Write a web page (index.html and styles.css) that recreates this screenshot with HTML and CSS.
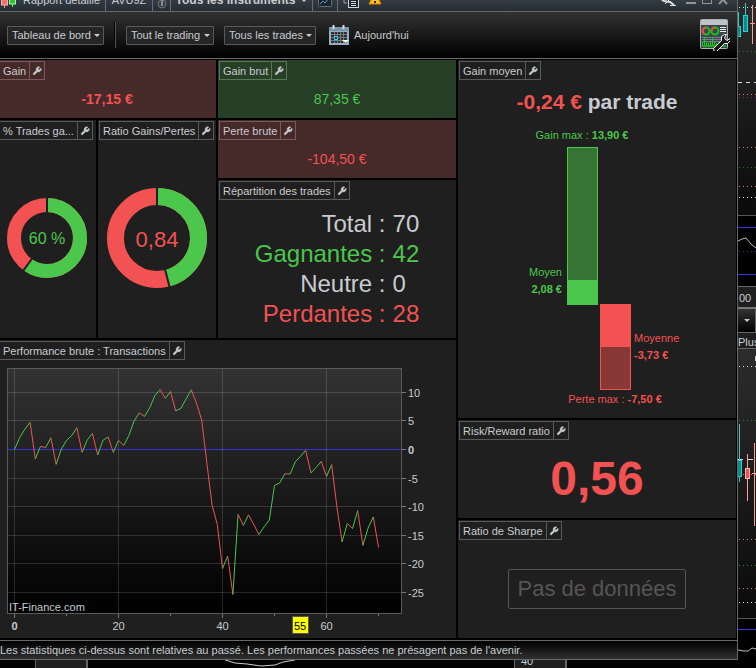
FILE: index.html
```html
<!DOCTYPE html>
<html lang="fr">

<head>
  <meta charset="UTF-8">
  <meta name="viewport" content="width=device-width, initial-scale=1.0">
  <title>Rapport détaillé</title>
  <link rel="stylesheet" href="styles.css">
</head>

<body>
  <!-- Icône clé partagée par tous les panneaux -->
  <svg class="sprite" aria-hidden="true">
    <symbol id="wrench" viewBox="0 0 24 24">
      <path d="M14.7 6.3a1 1 0 0 0 0 1.4l1.6 1.6a1 1 0 0 0 1.4 0l3.77-3.77a6 6 0 0 1-7.94 7.94l-6.91 6.91a2.12 2.12 0 0 1-3-3l6.91-6.91a6 6 0 0 1 7.94-7.94l-3.76 3.76z" stroke="currentColor" stroke-width="1.500"/>
    </symbol>
  </svg>

  <main class="window">
    <header class="titlebar">
      <div class="titlebar-row">
        <svg class="tab-icon" width="18" height="14" viewBox="0 0 18 14" aria-hidden="true">
          <path d="M4.500 0v10" stroke="#ff8a8a"/><rect x="1.500" y="1" width="6" height="6" fill="#f26d6d" stroke="#ffb0b0"/>
          <path d="M12.500 0v9" stroke="#5dff5d"/><rect x="9.500" y="0" width="6" height="6" fill="#35c435" stroke="#9dff9d"/>
        </svg>
        <span class="tab tab-name">Rapport détaillé</span>
        <span class="tab tab-code">AVU9Z</span>
        <span class="tab tab-link">
          <svg width="12" height="14" viewBox="0 0 12 14" aria-hidden="true">
            <circle cx="6" cy="8" r="4" fill="#3c4145" stroke="#6b7075"/><path d="M6 2v8" stroke="#85898d" stroke-width="2"/>
          </svg>
        </span>
        <span class="tab tab-title">Tous les instruments <i class="arrow"></i></span>
        <span class="tab tab-tool">
          <svg width="14" height="14" viewBox="0 0 14 14" aria-hidden="true">
            <rect x=".5" y=".5" width="13" height="10" rx="1" fill="#1c242b" stroke="#626a70"/><path d="M2 8l3-3 2 2 4-5" fill="none" stroke="#4b9fc4"/>
          </svg>
        </span>
        <span class="tab tab-tool last">
          <svg width="16" height="16" viewBox="0 0 16 16" aria-hidden="true">
            <path d="M4 8H1V1h8" fill="none" stroke="#9aa0a5"/><rect x="5.500" y="2.500" width="10" height="10" fill="#20262c" stroke="#d0d4d8"/>
            <path d="M8 6.500h5M8 8.500h5M8 10.500h5" stroke="#d0d4d8"/>
          </svg>
        </span>
        <svg class="warning" width="14" height="13" viewBox="0 0 14 13" aria-hidden="true">
          <path d="M7 0l6 12H1z" fill="#ffc21a" stroke="#e07f00"/><path d="M7 4v4M7 9v2" stroke="#222" stroke-width="2"/>
        </svg>
        <svg class="window-icons" width="76" height="15" viewBox="0 0 76 15" aria-hidden="true">
          <path d="M4 5l4 3 6 1 4 3" fill="none" stroke="#e0e0e0" stroke-width="2"/><path d="M9 11l4-4M14 12.500h6" stroke="#e0e0e0"/>
          <path d="M30 10h10" stroke="#90959a" stroke-width="2"/>
          <rect x="46.500" y="1.500" width="9" height="9" fill="none" stroke="#90959a"/>
          <path d="M63 11l8-9M63 2l8 9" stroke="#90959a" stroke-width="2"/>
        </svg>
      </div>
    </header>

    <nav class="toolbar">
      <span class="dropdown">
        <select class="dropdown-select" aria-label="Vue"><option>Tableau de bord</option></select>
        <i class="arrow"></i>
      </span>
      <span class="separator"></span>
      <span class="dropdown">
        <select class="dropdown-select" aria-label="Type de trading"><option>Tout le trading</option></select>
        <i class="arrow"></i>
      </span>
      <span class="dropdown">
        <select class="dropdown-select" aria-label="Trades"><option>Tous les trades</option></select>
        <i class="arrow"></i>
      </span>
      <button class="date-button" type="button">
        <svg width="21" height="20" viewBox="0 0 21 20" aria-hidden="true">
          <rect x="0" y="2" width="20" height="18" fill="#94aec2"/>
          <rect x="0" y="2" width="20" height="4" fill="#7895ab"/>
          <path d="M4.500 0v4M14.500 0v4" stroke="#e4d5de" stroke-width="2"/>
          <rect x="2" y="7" width="16" height="11" fill="#2d3032"/>
          <path d="M2 9.500h16M2 12.500h16M2 15.500h16M5.500 7v11M8.500 7v11M11.500 7v11M14.500 7v11" stroke="#777b7e"/>
          <rect x="5.500" y="11.500" width="3" height="3" fill="#234" stroke="#3fc4f5"/>
          <path d="M13 15h7l-3.500 3z" fill="#fff"/>
        </svg>
        Aujourd'hui
      </button>
      <button class="settings-button" type="button" aria-label="Configurer le tableau de bord">
        <svg width="30" height="32" viewBox="0 0 30 32" aria-hidden="true">
          <rect x=".5" y=".5" width="27" height="29" rx="1" fill="#3c4550" stroke="#a9b1b8"/>
          <rect x="1" y="1" width="26" height="5" fill="#bcc3c9"/>
          <circle cx="6" cy="12" r="3.500" fill="none" stroke="#14c414" stroke-width="2"/>
          <path d="M6 8.500a3.500 3.500 0 0 0-1.500 6.500" fill="none" stroke="#f04848" stroke-width="2"/>
          <circle cx="15" cy="12" r="3.500" fill="none" stroke="#14c414" stroke-width="2"/>
          <path d="M15 8.500a3.500 3.500 0 0 0-3.500 3.500" fill="none" stroke="#f04848" stroke-width="2"/>
          <path d="M20 8.500h6M20 10.500h6M20 12.500h6" stroke="#e8ebed"/>
          <path d="M2 18.500h24M2 20.500h24M2 22.500h24" stroke="#78808a"/>
          <path d="M2.500 28v-6M4.500 28V18M6.500 28v-5M8.500 28v-4M10.500 28v-6M12.500 28V19M14.500 28v-5M16.500 28v-4M22.500 28v-3M24.500 28v-2" stroke="#16d016"/>
          <path d="M2 27h24" stroke="#16b016" stroke-width="2"/>
          <path d="M13.500 29.500l8-8v-4l3-2h2l-2 3 1 2 2 1 2-2 1 2-3 3h-3l-8 8-2 .5z" fill="#15181b" stroke="#fff"/>
        </svg>
      </button>
    </nav>

    <section class="dashboard">
      <article class="panel panel-gain loss">
        <div class="panel-head"><h2>Gain</h2><button type="button" aria-label="Configurer Gain"><svg><use href="#wrench"/></svg></button></div>
        <p class="value red strong">-17,15 €</p>
      </article>

      <article class="panel panel-winrate">
        <div class="panel-head"><h2>% Trades ga...</h2><button type="button" aria-label="Configurer % Trades gagnants"><svg><use href="#wrench"/></svg></button></div>
        <div class="value">
          <svg class="donut" width="80" height="80" viewBox="0 0 80 80">
            <g transform="rotate(-90 40 40)" fill="none" stroke-width="14">
              <circle cx="40" cy="40" r="33" stroke="#f25252"/>
              <circle cx="40" cy="40" r="33" stroke="#4bc74b" pathLength="100" stroke-dasharray="60 40"/>
              <path d="M65 40h16" stroke="#1f1f1f" stroke-width="2"/>
              <path d="M65 40h16" stroke="#1f1f1f" stroke-width="2" transform="rotate(216 40 40)"/>
            </g>
            <text x="40" y="46" class="donut-text green-fill small">60 %</text>
          </svg>
        </div>
      </article>

      <article class="panel panel-ratio">
        <div class="panel-head"><h2>Ratio Gains/Pertes</h2><button type="button" aria-label="Configurer Ratio Gains/Pertes"><svg><use href="#wrench"/></svg></button></div>
        <div class="value">
          <svg class="donut" width="100" height="100" viewBox="0 0 100 100">
            <g transform="rotate(-90 50 50)" fill="none" stroke-width="17">
              <circle cx="50" cy="50" r="41.500" stroke="#f25252"/>
              <circle cx="50" cy="50" r="41.500" stroke="#4bc74b" pathLength="100" stroke-dasharray="46 54"/>
              <path d="M82 50h19" stroke="#1f1f1f" stroke-width="2"/>
              <path d="M82 50h19" stroke="#1f1f1f" stroke-width="2" transform="rotate(165.600 50 50)"/>
            </g>
            <text x="50" y="59" class="donut-text red-fill">0,84</text>
          </svg>
        </div>
      </article>

      <article class="panel panel-gross-gain profit">
        <div class="panel-head"><h2>Gain brut</h2><button type="button" aria-label="Configurer Gain brut"><svg><use href="#wrench"/></svg></button></div>
        <p class="value green">87,35 €</p>
      </article>

      <article class="panel panel-gross-loss loss">
        <div class="panel-head"><h2>Perte brute</h2><button type="button" aria-label="Configurer Perte brute"><svg><use href="#wrench"/></svg></button></div>
        <p class="value red">-104,50 €</p>
      </article>

      <article class="panel panel-split">
        <div class="panel-head"><h2>Répartition des trades</h2><button type="button" aria-label="Configurer Répartition des trades"><svg><use href="#wrench"/></svg></button></div>
        <div class="value">
          <dl class="split">
            <dt>Total :</dt><dd>70</dd>
            <dt class="green">Gagnantes :</dt><dd class="green">42</dd>
            <dt>Neutre :</dt><dd>0</dd>
            <dt class="red">Perdantes :</dt><dd class="red">28</dd>
          </dl>
        </div>
      </article>

      <article class="panel panel-average">
        <div class="panel-head"><h2>Gain moyen</h2><button type="button" aria-label="Configurer Gain moyen"><svg><use href="#wrench"/></svg></button></div>
        <p class="average-title"><span class="red">-0,24 €</span> par trade</p>
        <svg class="average-chart" viewBox="0 0 278 298">
          <text x="124" y="19" text-anchor="middle" class="green-fill">Gain max : <tspan class="strong">13,90 €</tspan></text>
          <rect x="109.500" y="27.500" width="30" height="157" fill="#367436" stroke="#4bc74b"/>
          <rect x="109" y="160" width="31" height="25" fill="#4bc74b"/>
          <text x="104" y="156" text-anchor="end" class="green-fill">Moyen</text>
          <text x="104" y="173" text-anchor="end" class="green-fill strong">2,08 €</text>
          <rect x="142.500" y="184.500" width="30" height="85" fill="#8a3737" stroke="#f25252"/>
          <rect x="142" y="184" width="31" height="43" fill="#f25252"/>
          <text x="176" y="222" class="red-fill">Moyenne</text>
          <text x="176" y="239" class="red-fill strong">-3,73 €</text>
          <text x="157" y="283" text-anchor="middle" class="red-fill">Perte max : <tspan class="strong">-7,50 €</tspan></text>
        </svg>
      </article>

      <article class="panel panel-performance">
        <div class="panel-head"><h2>Performance brute : Transactions</h2><button type="button" aria-label="Configurer Performance brute"><svg><use href="#wrench"/></svg></button></div>
        <svg class="performance-chart" viewBox="0 0 458 278">
          <defs>
            <linearGradient id="plotShade" x1="0" y1="0" x2="0" y2="1">
              <stop offset="0" stop-color="#333"/>
              <stop offset="1" stop-color="#000"/>
            </linearGradient>
          </defs>
          <rect x="9.500" y="8.500" width="394" height="245" fill="url(#plotShade)" stroke="#5a5a5a"/>
          <g id="plotGrid"></g>
          <g id="plotLine"></g>
          <text x="11" y="251">IT-Finance.com</text>
          <rect x="294.500" y="256.500" width="16" height="17" fill="#ff0" stroke="#555"/>
          <text x="302" y="270" text-anchor="middle" class="cursor-text">55</text>
        </svg>
      </article>

      <article class="panel panel-risk">
        <div class="panel-head"><h2>Risk/Reward ratio</h2><button type="button" aria-label="Configurer Risk/Reward ratio"><svg><use href="#wrench"/></svg></button></div>
        <p class="value red strong huge">0,56</p>
      </article>

      <article class="panel panel-sharpe">
        <div class="panel-head"><h2>Ratio de Sharpe</h2><button type="button" aria-label="Configurer Ratio de Sharpe"><svg><use href="#wrench"/></svg></button></div>
        <div class="value"><span class="no-data">Pas de données</span></div>
      </article>
    </section>

    <footer class="statusbar">Les statistiques ci-dessus sont relatives au passé. Les performances passées ne présagent pas de l'avenir.</footer>
  </main>

  <!-- Graphiques visibles derrière la fenêtre -->
  <aside class="behind">
    <svg width="18" height="286" viewBox="0 0 18 286" aria-hidden="true">
      <defs>
        <linearGradient id="behindShade" x1="0" y1="0" x2="0" y2="1">
          <stop offset="0" stop-color="#2c2c2c"/>
          <stop offset="1" stop-color="#0a0a0a"/>
        </linearGradient>
      </defs>
      <rect width="18" height="215" fill="url(#behindShade)"/>
      <path d="M1 7.500h17" stroke="#ddd" stroke-dasharray="1 3"/>
      <path d="M.5 12v14M7.500 3v12" stroke="#2ad0d0"/>
      <rect x="-1" y="26.500" width="3.500" height="10" fill="#128a8a" stroke="#2ad0d0"/>
      <rect x="5.500" y="15.500" width="4" height="16" fill="#128a8a" stroke="#2ad0d0"/>
      <path d="M14.500 5v39M12 23.500h5" stroke="#ff9a9a"/>
      <path d="M1 51.500h17M1 167.500h17" stroke="#267326" stroke-dasharray="1 3"/>
      <path d="M0 82.500h18" stroke="#ddd" stroke-dasharray="4 4"/>
      <path d="M1 94.500h17M1 147.500h17M1 186.500h17" stroke="#e27171" stroke-dasharray="1 3"/>
      <path d="M1 97.500h17" stroke="#6b2a6b" stroke-dasharray="1 3"/>
      <path d="M1 197.500h17" stroke="#ddd" stroke-dasharray="1 3"/>
      <path d="M0 215.500h18" stroke="#555"/>
      <path d="M0 227.500h18M0 274.500h18" stroke="#3535e0"/>
      <path d="M1 251.500h17" stroke="#3535a0" stroke-dasharray="1 3"/>
      <path d="M0 241l4-2 4-1 5 6 5 4" fill="none" stroke="#bbb"/>
    </svg>
    <p class="behind-axis">00</p>
    <button class="behind-button" type="button" aria-label="Options"><i class="arrow"></i></button>
    <p class="behind-label">Plus</p>
    <svg width="18" height="319" viewBox="0 0 18 319" aria-hidden="true">
      <rect width="18" height="270" fill="url(#behindShade)"/>
      <path d="M17.500 7v5" stroke="#ccc"/>
      <path d="M1 17.500h17M1 253.500h17" stroke="#ddd" stroke-dasharray="1 3"/>
      <path d="M1 71.500h17M1 216.500h17" stroke="#2f802f" stroke-dasharray="1 3"/>
      <path d="M1 190.500h17M1 239.500h17M1 125.500h17" stroke="#e27171" stroke-dasharray="1 3"/>
      <path d="M0 110.500h18" stroke="#ddd" stroke-dasharray="5 5"/>
      <path d="M1.500 75v58" stroke="#2ad0d0"/>
      <rect x="-1" y="111.500" width="4.500" height="16" fill="#128a8a" stroke="#2ad0d0"/>
      <path d="M9.500 105v47M16.500 94v83M14 124.500h4" stroke="#ff9a9a"/>
      <rect x="7.500" y="119.500" width="4" height="10" fill="#f25252" stroke="#ffb0b0"/>
      <path d="M0 269.500h18" stroke="#555"/>
      <path d="M0 280.500h18" stroke="#3535e0"/>
      <path d="M0 301l6 1h4l4-3 4 1" fill="none" stroke="#bbb"/>
    </svg>
  </aside>

  <div class="below">
    <span class="below-tab"></span>
    <svg width="70" height="8" viewBox="0 0 70 8" aria-hidden="true"><path d="M0 0l10 3 12 1 14 2 14-1 8-3 12-2" fill="none" stroke="#ccc"/></svg>
    <span class="below-axis"><span class="below-number">40</span></span>
  </div>

  <script>
    // Gains cumulés après chaque transaction
    const equity = [
      0, 2.1, 3.55, 4.75, -1.65, 0.55, 0.35, 2.05, -2.6, 0.05,
      1.6, 2.45, 3.8, -0.5, 1.7, 2.8, -0.95, 1.6, 2.2, -0.5,
      1.6, 0.7, 2.45, 5, 6.4, 5.8, 7.3, 9.45, 10.5, 8.95,
      10.15, 6.75, 7.2, 8.85, 10.45, 8.1, 5.15, -2.45, -9.75, -13.15,
      -20.85, -18.65, -25.4, -11.35, -13.3, -11.45, -13.1, -14.9, -13.55, -12.35,
      -6.3, -5.85, -4.25, -4.3, -2.15, -1.2, -0.15, -4.1, -3.15, -2.1,
      -4.75, -2.65, -10.05, -16.2, -12.95, -13.85, -10.7, -16.8, -13.75, -11.8, -17.15
    ];

    const plotX = n => 16.5 + n * 5.2;
    const plotY = v => 89.5 - v * 5.71;

    function segment(x1, y1, x2, y2, className) {
      return `<line x1="${x1}" y1="${y1}" x2="${x2}" y2="${y2}" class="${className}"/>`;
    }

    let grid = "";
    for (let v = 10; v >= -25; v -= 5) {
      const y = Math.floor(plotY(v)) + 0.5;
      grid += segment(10, y, 403, y, v === 0 ? "zero-line" : "grid-line") + segment(404, y, 408, y, "tick");
      grid += `<text x="410" y="${y + 4}"${v === 0 ? ' class="strong"' : ""}>${v}</text>`;
    }
    for (let n = 0; n <= 70; n += 10) {
      const x = Math.floor(plotX(n)) + 0.5;
      if (n % 20 === 0) {
        grid += segment(x, 9, x, 253, "grid-line");
        grid += `<text x="${x}" y="270" text-anchor="middle"${n === 0 ? ' class="strong"' : ""}>${n}</text>`;
      }
      grid += segment(x, 254, x, n % 20 === 0 ? 258 : 256, "tick");
    }
    document.getElementById("plotGrid").innerHTML = grid;

    // Vert si la transaction est gagnante, rouge sinon
    let line = "";
    for (let i = 1; i < equity.length; i++) {
      const color = equity[i] > equity[i - 1] ? "win" : "lose";
      line += segment(plotX(i - 1), plotY(equity[i - 1]), plotX(i), plotY(equity[i]), color);
    }
    document.getElementById("plotLine").innerHTML = line;
  </script>
</body>

</html>
```
FILE: styles.css
```css
* {
  box-sizing: border-box;
}

body {
  margin: 0;
  min-height: 100vh;
  display: grid;
  grid-template-columns: minmax(0, 1fr) 18px;
  grid-template-rows: minmax(0, 1fr) 9px;
  background: #000;
  color: #c8ccd0;
  font-family: "Liberation Sans", Arial, sans-serif;
  font-size: 11px;
  line-height: 14px;
  overflow: hidden;
}

h2,
p,
dl,
dd {
  margin: 0;
}

button,
select {
  font: inherit;
  color: inherit;
}

.sprite {
  position: absolute;
  width: 0;
  height: 0;
}

.window {
  display: flex;
  flex-direction: column;
  border-right: 1px solid #66686a;
  border-bottom: 1px solid #66686a;
  overflow: hidden;
}

.arrow {
  border: 3px solid transparent;
  border-top-color: currentColor;
  border-bottom-width: 0;
}

/* Barre de titre */
.titlebar {
  display: flex;
  align-items: flex-end;
  height: 12px;
  overflow: hidden;
  background: linear-gradient(#343c44, #262d33);
  border-bottom: 1px solid #666a70;
}

.titlebar-row {
  display: flex;
  flex: 1;
  height: 24px;
}

.tab-icon {
  margin: 11px 0 0;
}

.tab {
  display: flex;
  align-items: center;
  justify-content: center;
  padding-top: 2px;
  border-right: 1px solid #666d74;
  white-space: nowrap;
}

.tab-name {
  width: 88px;
  font-size: 11px;
}

.tab-code {
  width: 47px;
  font-size: 11px;
}

.tab-link {
  width: 18px;
  padding-top: 8px;
}

.tab-title {
  width: 142px;
  gap: 6px;
  font-size: 12px;
  font-weight: bold;
}

.tab-tool {
  width: 25px;
  padding-top: 8px;
}

.tab-tool.last {
  border-right: 0;
}

.warning {
  margin: 5px 0 0 5px;
}

.window-icons {
  margin: 6px 5px 0 auto;
}

/* Barre d'outils */
.toolbar {
  display: flex;
  align-items: center;
  height: 47px;
  padding: 0 7px;
  background: linear-gradient(#323232, #000);
  border-bottom: 1px solid #6a6a6a;
}

.dropdown {
  display: flex;
  align-items: center;
  height: 19px;
  margin-right: 10px;
  padding: 0 3px 0 4px;
  background: #262626;
  border: 1px solid #5a5a5a;
  border-radius: 1px;
}

.dropdown-select {
  appearance: none;
  margin: 0;
  padding: 0 3px 0 0;
  background: none;
  border: 0;
}

.separator {
  width: 2px;
  height: 26px;
  margin-right: 10px;
  background: #000;
  border-right: 1px solid #555;
}

.date-button {
  display: flex;
  align-items: center;
  gap: 4px;
  margin-left: 3px;
  padding: 0;
  background: none;
  border: 0;
}

.settings-button {
  display: flex;
  margin-left: auto;
  padding: 0;
  background: none;
  border: 0;
}

/* Tableau de bord */
.dashboard {
  flex: 1;
  display: grid;
  grid-template-columns: 98fr 118fr 238fr 278fr;
  grid-template-rows: 58fr 58fr 158fr 78fr 98fr 118fr;
  gap: 2px;
  margin: 1px 1px 1px -2px;
}

.panel {
  display: flex;
  flex-direction: column;
  min-width: 0;
  min-height: 0;
  background: #1f1f1f;
  --line: #5a5a5a;
}

.panel.loss {
  background: #462929;
  --line: #7d5a5a;
}

.panel.profit {
  background: #273f27;
  --line: #547a54;
}

.panel-gain {
  grid-area: 1 / 1 / 2 / 3;
}

.panel-winrate {
  grid-area: 2 / 1 / 4 / 2;
}

.panel-ratio {
  grid-area: 2 / 2 / 4 / 3;
}

.panel-gross-gain {
  grid-area: 1 / 3 / 2 / 4;
}

.panel-gross-loss {
  grid-area: 2 / 3 / 3 / 4;
}

.panel-split {
  grid-area: 3 / 3 / 4 / 4;
}

.panel-average {
  grid-area: 1 / 4 / 5 / 5;
}

.panel-performance {
  grid-area: 4 / 1 / 7 / 4;
}

.panel-risk {
  grid-area: 5 / 4 / 6 / 5;
}

.panel-sharpe {
  grid-area: 6 / 4 / 7 / 5;
}

.panel-head {
  display: flex;
  align-self: flex-start;
  height: 19px;
  margin: 1px 0 0 1px;
  border: 1px solid var(--line);
}

.panel-head h2 {
  padding: 2px 3px 0;
  font-size: 11px;
  font-weight: normal;
  white-space: nowrap;
}

.panel-head button {
  display: flex;
  align-items: center;
  justify-content: center;
  width: 15px;
  padding: 0;
  background: none;
  border: 0;
  border-left: 1px solid var(--line);
}

.panel-head svg {
  width: 10px;
  height: 10px;
  fill: currentColor;
}

.value {
  flex: 1;
  display: flex;
  align-items: center;
  justify-content: center;
  font-size: 14px;
}

.huge {
  font-size: 48px;
}

.strong {
  font-weight: bold;
}

.red {
  color: #f25252;
}

.green {
  color: #4bc74b;
}

svg text {
  fill: #c8ccd0;
  font-size: 11px;
}

svg .red-fill {
  fill: #f25252;
}

svg .green-fill {
  fill: #4bc74b;
}

svg .cursor-text {
  fill: #000;
}

.donut {
  margin-bottom: 2px;
}

svg .donut-text {
  font-size: 22px;
  text-anchor: middle;
}

svg .donut-text.small {
  font-size: 16px;
}

.split {
  display: grid;
  grid-template-columns: auto auto;
  column-gap: 7px;
  font-size: 24px;
  line-height: 30px;
}

.split dt {
  text-align: right;
}

.average-title {
  padding: 10px 0 6px;
  font-size: 21px;
  font-weight: bold;
  line-height: 24px;
  text-align: center;
}

.average-chart,
.performance-chart {
  flex: 1;
  width: 100%;
  min-height: 0;
}

.grid-line {
  stroke: #fff;
  stroke-opacity: 0.14;
}

.zero-line {
  stroke: #3333d8;
}

.tick {
  stroke: #777;
}

.win {
  stroke: #4bc74b;
}

.lose {
  stroke: #f25252;
}

.no-data {
  padding: 0 8px;
  border: 1px solid #555;
  border-radius: 2px;
  color: #555;
  font-size: 22px;
  line-height: 38px;
}

.statusbar {
  height: 19px;
  margin-top: 1px;
  padding-top: 2px;
  background: linear-gradient(#000, #303030);
  border-top: 1px solid #66686a;
}

/* Éléments derrière la fenêtre */
.behind {
  grid-row: 1 / 3;
  grid-column: 2;
  display: flex;
  flex-direction: column;
  overflow: hidden;
}

.behind svg {
  flex: none;
}

.behind-axis {
  height: 23px;
  padding: 4px 0 0 1px;
  background: #1f1f1f;
  border-top: 1px solid #666;
  border-bottom: 2px solid #777;
}

.behind-button {
  display: flex;
  align-items: center;
  justify-content: center;
  height: 24px;
  padding: 0;
  background: linear-gradient(#333, #000);
  border: 0;
  border-right: 1px solid #666;
  border-bottom: 1px solid #666;
}

.behind-label {
  height: 16px;
  padding-top: 2px;
  background: #1f1f1f;
  border-bottom: 1px solid #666;
}

.below {
  display: flex;
  align-items: flex-start;
  height: 9px;
  overflow: hidden;
}

.below-tab {
  width: 53px;
  height: 9px;
  margin: 0 137px 0 35px;
  background: #1f1f1f;
  border-left: 1px solid #666;
  border-right: 2px solid #666;
}

.below-axis {
  display: flex;
  align-items: flex-end;
  width: 53px;
  height: 9px;
  margin-left: 219px;
  padding-left: 6px;
  background: #1f1f1f;
  border-left: 1px solid #666;
  border-right: 2px solid #666;
}

.below-number {
  flex: none;
  margin-bottom: 1px;
}
```
